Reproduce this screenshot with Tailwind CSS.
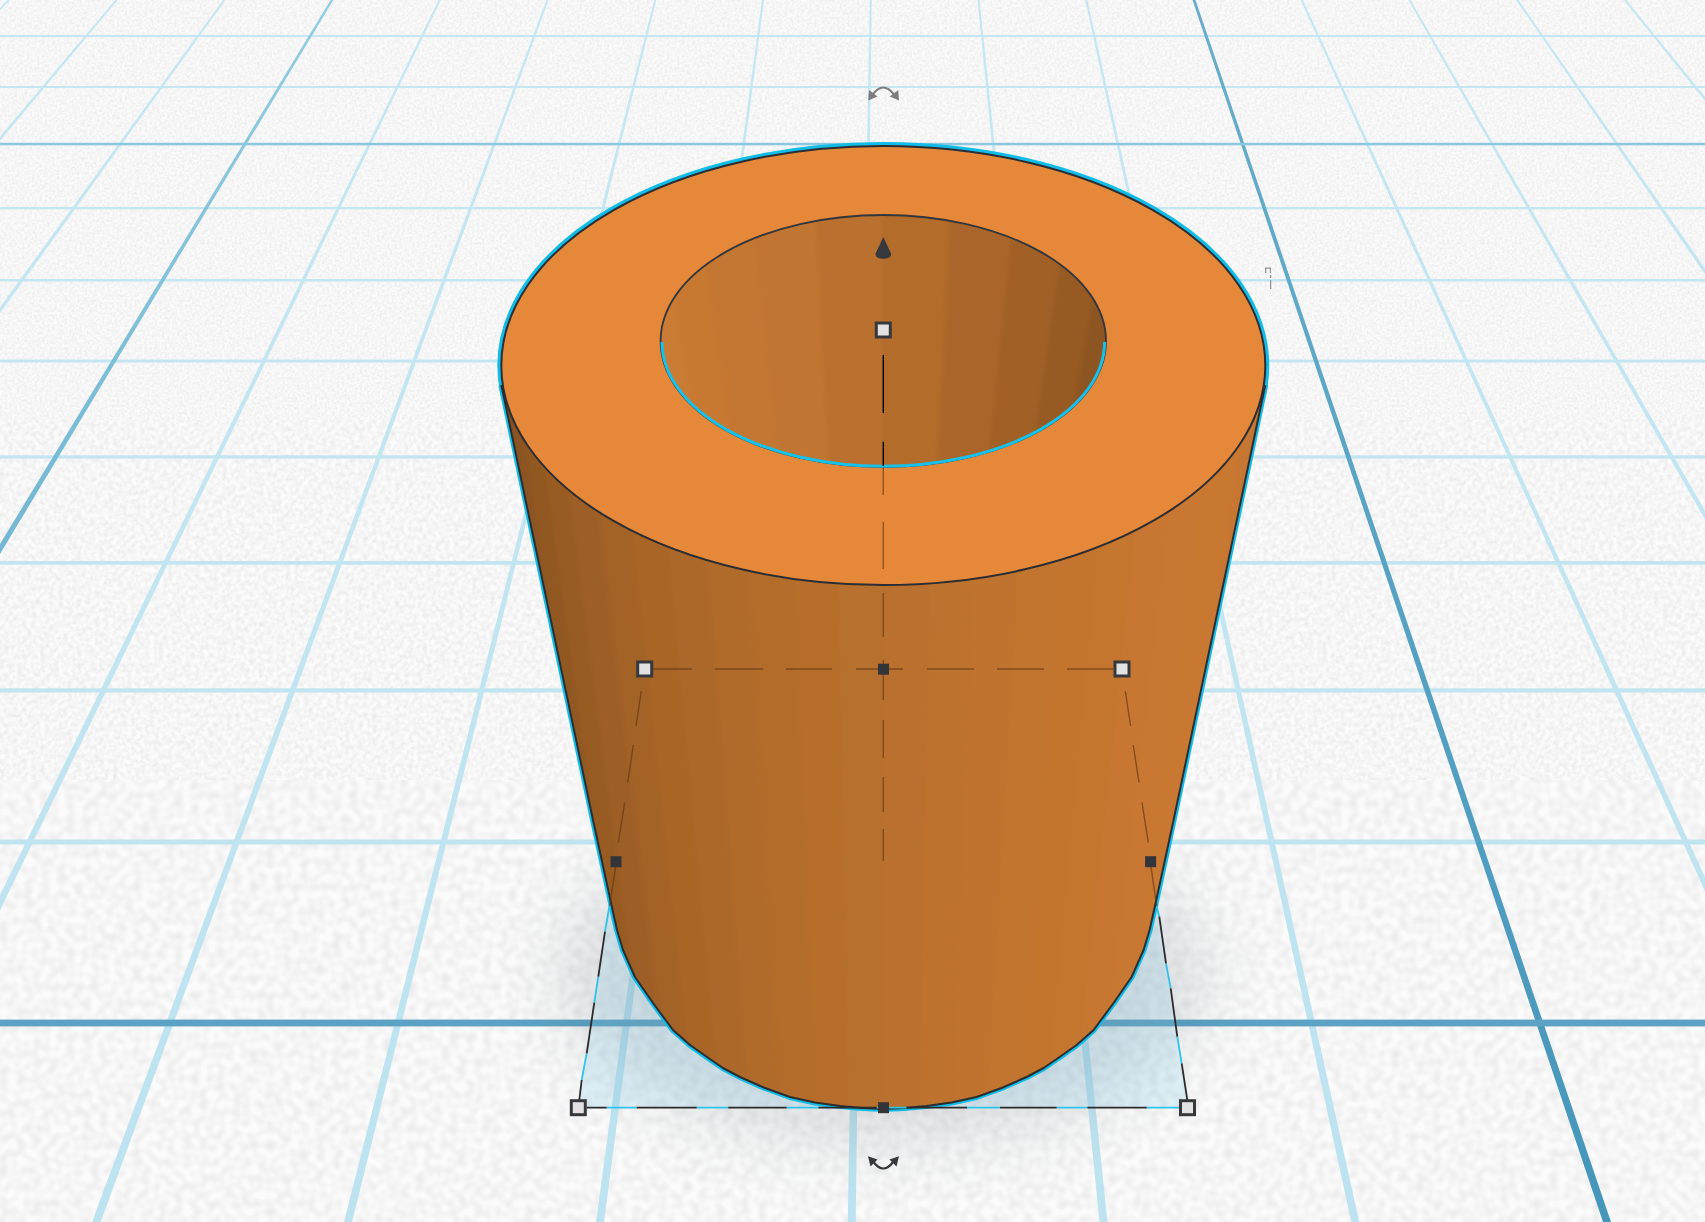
<!doctype html>
<html lang="en">
<head>
<meta charset="utf-8">
<title>Cylinder</title>
<script src="https://cdn.jsdelivr.net/npm/@tailwindcss/browser@4"></script>
</head>
<body class="m-0 bg-[#f8f8f8]">
<div class="relative w-[1705px] h-[1222px] overflow-hidden bg-[#fbfbfb]">
<svg class="block w-[1705px] h-[1222px]" viewBox="0 0 1705 1222" xmlns="http://www.w3.org/2000/svg">
  <defs>
    <filter id="n1" x="0" y="0" width="100%" height="100%" color-interpolation-filters="sRGB"><feTurbulence type="fractalNoise" baseFrequency="0.4" numOctaves="2" seed="4"/><feColorMatrix values="0 0 0 0 .45 0 0 0 0 .45 0 0 0 0 .47 .2 0 0 0 -.06"/></filter>
    <filter id="n2" x="0" y="0" width="100%" height="100%" color-interpolation-filters="sRGB"><feTurbulence type="fractalNoise" baseFrequency="0.22" numOctaves="2" seed="9"/><feColorMatrix values="0 0 0 0 .45 0 0 0 0 .45 0 0 0 0 .47 .22 0 0 0 -.07"/></filter>
    <filter id="n3" x="0" y="0" width="100%" height="100%" color-interpolation-filters="sRGB"><feTurbulence type="fractalNoise" baseFrequency="0.12" numOctaves="1" seed="12"/><feColorMatrix values="0 0 0 0 .45 0 0 0 0 .45 0 0 0 0 .47 .24 0 0 0 -.08"/></filter>
    <filter id="sh" x="-30%" y="-40%" width="160%" height="180%"><feGaussianBlur stdDeviation="34"/></filter>
    <filter id="soft" x="-5%" y="-5%" width="110%" height="110%"><feGaussianBlur stdDeviation="2.2"/></filter>
    <linearGradient id="tk0" gradientUnits="userSpaceOnUse" x1="0" y1="0" x2="0" y2="600"><stop offset="0" stop-color="#93cde1"/><stop offset="1" stop-color="#6fb5d2"/></linearGradient>
    <linearGradient id="tk8" gradientUnits="userSpaceOnUse" x1="0" y1="0" x2="0" y2="1222"><stop offset="0" stop-color="#68aecb"/><stop offset="1" stop-color="#4596bb"/></linearGradient>
    <linearGradient id="thin" gradientUnits="userSpaceOnUse" x1="0" y1="0" x2="0" y2="1222"><stop offset="0" stop-color="#c5e7f2"/><stop offset="1" stop-color="#bde3f0"/></linearGradient>
    <clipPath id="bodyClip"><path d="M501.3,385 L593,820 L611.7,906 L617,930 L623,950 L635,977 L653,1003 L673,1030 L690,1045 L707,1057 L723,1068 L740,1077 L765,1088 L790,1097 L815,1102.5 L840,1106 L862,1108 L883.3,1109 L904.6,1108 L926.6,1106 L951.6,1102.5 L976.6,1097 L1001.6,1088 L1026.6,1077 L1043.6,1068 L1059.6,1057 L1076.6,1045 L1093.6,1030 L1113.6,1003 L1131.6,977 L1143.6,950 L1149.6,930 L1155,906 L1173.6,820 L1265.3,385 Z"/></clipPath>
    <clipPath id="holeClip"><ellipse cx="883.3" cy="341" rx="222.7" ry="126"/></clipPath>
    <g id="wall">
      <polygon fill="#875120" points="480,365 505,365 617,1112 590,1112"/>
      <polygon fill="#8d5521" points="504.6,365 514.8,365 624,1112 616.6,1112"/>
      <polygon fill="#925822" points="514.3,365 530.9,365 635.3,1112 623.5,1112"/>
      <polygon fill="#985c24" points="530.4,365 553,365 650.8,1112 634.8,1112"/>
      <polygon fill="#9e5f25" points="552.5,365 580.7,365 670.4,1112 650.3,1112"/>
      <polygon fill="#a36226" points="580.2,365 613.7,365 693.6,1112 669.9,1112"/>
      <polygon fill="#a86528" points="613.2,365 651.2,365 720,1112 693.1,1112"/>
      <polygon fill="#ac6829" points="650.7,365 692.8,365 749.3,1112 719.5,1112"/>
      <polygon fill="#b06a2a" points="692.3,365 737.6,365 780.9,1112 748.8,1112"/>
      <polygon fill="#b36c2b" points="737.1,365 784.9,365 814.2,1112 780.4,1112"/>
      <polygon fill="#b66e2c" points="784.4,365 833.9,365 848.7,1112 813.7,1112"/>
      <polygon fill="#b86f2d" points="833.4,365 883.8,365 883.8,1112 848.2,1112"/>
      <polygon fill="#ba702d" points="883.3,365 933.7,365 918.9,1112 883.3,1112"/>
      <polygon fill="#bd722e" points="933.2,365 982.7,365 953.4,1112 918.4,1112"/>
      <polygon fill="#bf732e" points="982.2,365 1030,365 986.7,1112 952.9,1112"/>
      <polygon fill="#c1742f" points="1029.5,365 1074.8,365 1018.3,1112 986.2,1112"/>
      <polygon fill="#c3752f" points="1074.3,365 1116.4,365 1047.6,1112 1017.8,1112"/>
      <polygon fill="#c5762f" points="1115.9,365 1153.9,365 1074,1112 1047.1,1112"/>
      <polygon fill="#c77730" points="1153.4,365 1186.9,365 1097.2,1112 1073.5,1112"/>
      <polygon fill="#c87830" points="1186.4,365 1214.6,365 1116.8,1112 1096.7,1112"/>
      <polygon fill="#c97831" points="1214.1,365 1236.7,365 1132.3,1112 1116.3,1112"/>
      <polygon fill="#c97831" points="1236.2,365 1252.8,365 1143.6,1112 1131.8,1112"/>
      <polygon fill="#c67730" points="1252.3,365 1262.5,365 1150.5,1112 1143.1,1112"/>
      <polygon fill="#c27530" points="1262,365 1290,365 1180,1112 1150,1112"/>
    </g>
    <g id="well">
      <polygon fill="#cb7c35" points="600,215 632.7,215 682.9,467 650,467"/>
      <polygon fill="#ca7b35" points="632.2,215 658.6,215 703.6,467 682.4,467"/>
      <polygon fill="#c77933" points="658.1,215 700,215 736.8,467 703.1,467"/>
      <polygon fill="#c47732" points="699.5,215 753.8,215 779.8,467 736.3,467"/>
      <polygon fill="#c07431" points="753.3,215 816.5,215 830,467 779.3,467"/>
      <polygon fill="#ba702e" points="816,215 883.8,215 883.8,467 829.5,467"/>
      <polygon fill="#b36c2b" points="883.3,215 951.1,215 937.6,467 883.3,467"/>
      <polygon fill="#aa6629" points="950.6,215 1013.8,215 987.8,467 937.1,467"/>
      <polygon fill="#a06026" points="1013.3,215 1067.6,215 1030.8,467 987.3,467"/>
      <polygon fill="#965a23" points="1067.1,215 1109,215 1064,467 1030.3,467"/>
      <polygon fill="#8d5521" points="1108.5,215 1134.9,215 1084.7,467 1063.5,467"/>
      <polygon fill="#865120" points="1134.4,215 1170,215 1120,467 1084.2,467"/>
    </g>
  </defs>

  <!-- floor noise -->
  <rect x="0" y="0" width="1705" height="420" filter="url(#n1)"/>
  <rect x="0" y="420" width="1705" height="360" filter="url(#n2)"/>
  <rect x="0" y="780" width="1705" height="442" filter="url(#n3)"/>

  <!-- floor grid: converging lines -->
  <g fill="url(#thin)">
    <polygon points="7.4,0 10.1,0 -1157,1222 -1169,1222"/>
    <polygon points="115.2,0 117.8,0 -905,1222 -917,1222"/>
    <polygon points="223,0 225.5,0 -654,1222 -664,1222"/>
    <polygon points="438.6,0 440.9,0 -151,1222 -160,1222"/>
    <polygon points="546.4,0 548.6,0 100.6,1222 92,1222"/>
    <polygon points="654.2,0 656.3,0 352,1222 344,1222"/>
    <polygon points="762,0 764,0 604,1222 596,1222"/>
    <polygon points="869.7,0 871.8,0 855.7,1222 847.7,1222"/>
    <polygon points="977.5,0 979.5,0 1107.5,1222 1099.5,1222"/>
    <polygon points="1085.2,0 1087.3,0 1359.3,1222 1351.3,1222"/>
    <polygon points="1300.6,0 1302.9,0 1863,1222 1855,1222"/>
    <polygon points="1408.4,0 1410.6,0 2115,1222 2106,1222"/>
    <polygon points="1516,0 1518.5,0 2368,1222 2358,1222"/>
    <polygon points="1623.7,0 1626.3,0 2620,1222 2609,1222"/>
    <rect x="0" y="35" width="1705" height="2"/>
    <rect x="0" y="86" width="1705" height="2"/>
    <rect x="0" y="207" width="1705" height="2.3"/>
    <rect x="0" y="279" width="1705" height="2.5"/>
    <rect x="0" y="359.6" width="1705" height="2.9"/>
    <rect x="0" y="455.3" width="1705" height="3.3"/>
    <rect x="0" y="561" width="1705" height="3.7"/>
    <rect x="0" y="688.3" width="1705" height="4.2"/>
    <rect x="0" y="839.5" width="1705" height="5"/>
  </g>
  <polygon points="330.6,0 333.4,0 -402,1222 -412,1222" fill="url(#tk0)"/>
  <polygon points="1192.5,0 1195.5,0 1611,1222 1603,1222" fill="url(#tk8)"/>
  <rect x="0" y="142.8" width="1705" height="2.5" fill="#8ac8df"/>
  <rect x="0" y="1019.6" width="1705" height="6.8" fill="#5ba2c4"/>

  <!-- soft shadow and selection plane -->
  <ellipse cx="883" cy="975" rx="320" ry="165" fill="#46525e" opacity="0.17" filter="url(#sh)"/>
  <polygon points="578.3,1107.7 1187.7,1107.7 1157,905 609.5,905" fill="#86cdee" opacity="0.22"/>

  <!-- cyan selection outline -->
  <g fill="none" stroke="#12bce6" stroke-linejoin="round">
    <ellipse cx="883.3" cy="365.5" rx="382" ry="219.5" stroke-width="8"/>
    <path stroke-width="6" d="M501.3,385 L593,820 L611.7,906 L617,930 L623,950 L635,977 L653,1003 L673,1030 L690,1045 L707,1057 L723,1068 L740,1077 L765,1088 L790,1097 L815,1102.5 L840,1106 L862,1108 L883.3,1109 L904.6,1108 L926.6,1106 L951.6,1102.5 L976.6,1097 L1001.6,1088 L1026.6,1077 L1043.6,1068 L1059.6,1057 L1076.6,1045 L1093.6,1030 L1113.6,1003 L1131.6,977 L1143.6,950 L1149.6,930 L1155,906 L1173.6,820 L1265.3,385"/>
  </g>

  <!-- cylinder wall facets -->
  <g clip-path="url(#bodyClip)">
    <use href="#wall"/>
    <use href="#wall" filter="url(#soft)"/>
  </g>
  <path fill="none" stroke="#2b2d31" stroke-width="2" stroke-linejoin="round" d="M501.3,385 L593,820 L611.7,906 L617,930 L623,950 L635,977 L653,1003 L673,1030 L690,1045 L707,1057 L723,1068 L740,1077 L765,1088 L790,1097 L815,1102.5 L840,1106 L862,1108 L883.3,1109 L904.6,1108 L926.6,1106 L951.6,1102.5 L976.6,1097 L1001.6,1088 L1026.6,1077 L1043.6,1068 L1059.6,1057 L1076.6,1045 L1093.6,1030 L1113.6,1003 L1131.6,977 L1143.6,950 L1149.6,930 L1155,906 L1173.6,820 L1265.3,385"/>

  <!-- rim -->
  <ellipse cx="883.3" cy="365.5" rx="382" ry="219.5" fill="#e5883a" stroke="#2b2d33" stroke-width="2"/>

  <!-- hole facets -->
  <g clip-path="url(#holeClip)">
    <use href="#well"/>
    <use href="#well" filter="url(#soft)"/>
  </g>
  <ellipse cx="883.3" cy="341" rx="222.7" ry="126" fill="none" stroke="#33363c" stroke-width="1.8"/>
  <path fill="none" stroke="#16c2ec" stroke-width="3" d="M662,342 A221.3,124.2 0 0 0 1104.6,342"/>

  <!-- handle guides -->
  <g stroke="#000" stroke-width="1.4" fill="none">
    <path d="M883.3,355 V413 M883.3,441.7 V466"/>
  </g>
  <g stroke="#5c3413" stroke-opacity="0.62" stroke-width="1.4" fill="none">
    <path d="M883.3,467 V495 M883.3,521.7 V569 M883.3,593 V637 M883.3,660 V700 M883.3,720 V758 M883.3,777 V812 M883.3,829 V861"/>
    <path stroke-width="1.6" d="M653,669 H692 M715,669 H763 M786,669 H832 M856,669 H903 M927,669 H974 M997,669 H1044 M1067,669 H1113"/>
    <path d="M641.3,691 L636,726 M633.3,745 L627.7,782.7 M624.7,802.3 L618.3,842.7 M615.7,866.7 L609.5,906"/>
    <path d="M1125.3,691 L1130.6,726 M1133.3,745 L1139,782.7 M1142,802.3 L1148.3,842.7 M1151,866.7 L1156.7,906"/>
  </g>

  <!-- base selection lines: cyan and dark alternate -->
  <g stroke="#2ec3ea" stroke-width="1.8" fill="none">
    <path d="M609.3,906.7 L605,931.7 M598.3,976.7 L594.3,1002.7 M586.7,1053.3 L581.7,1080"/>
    <path d="M1156.7,906.7 L1159.3,916.7 M1166,963.3 L1170.7,988.3 M1177.3,1036.7 L1181.7,1063.3"/>
    <path d="M606.7,1107.7 H636.7 M696.7,1107.7 H728.3 M786.7,1107.7 H818.3 M876.7,1107.7 H906.7 M967,1107.7 H1000 M1056.7,1107.7 H1087.3 M1146.7,1107.7 H1180"/>
  </g>
  <g stroke="#2b2b2b" stroke-width="1.8" fill="none">
    <path d="M605,931.7 L598.3,976.7 M594.3,1002.7 L586.7,1053.3 M581.7,1080 L579.3,1100"/>
    <path d="M1159.3,916.7 L1166,963.3 M1170.7,988.3 L1177.3,1036.7 M1181.7,1063.3 L1187.3,1100"/>
    <path d="M586.7,1107.7 H606.7 M636.7,1107.7 H696.7 M728.3,1107.7 H786.7 M818.3,1107.7 H876.7 M906.7,1107.7 H967 M1000,1107.7 H1056.7 M1087.3,1107.7 H1146.7"/>
  </g>

  <!-- handles: large -->
  <g fill="#e2e2e2" stroke="#36383c" stroke-width="3">
    <rect x="876.3" y="323" width="14" height="14"/>
    <rect x="637.7" y="662" width="14" height="14"/>
    <rect x="1115" y="662" width="14" height="14"/>
    <rect x="571.3" y="1100.7" width="14" height="14"/>
    <rect x="1180.5" y="1100.7" width="14" height="14"/>
  </g>
  <!-- handles: small -->
  <g fill="#33353a">
    <rect x="878" y="663.7" width="11" height="11"/>
    <rect x="610.5" y="856.2" width="11" height="11"/>
    <rect x="1145.1" y="856.2" width="11" height="11"/>
    <rect x="878" y="1102.2" width="11" height="11"/>
  </g>

  <!-- height cone -->
  <path fill="#36383c" d="M883.3,237 L875.6,253.5 Q874.6,258.5 883.3,258.8 Q892,258.5 891,253.5 Z"/>

  <!-- rotate arrows -->
  <path fill="none" stroke="#7d7d7d" stroke-width="2.2" d="M873,94 Q883.3,81 893.6,94"/>
  <g fill="#7d7d7d">
    <polygon points="868.3,100.5 869,90 877.5,96.5"/>
    <polygon points="899,100.5 898.3,90 889.8,96.5"/>
  </g>
  <path fill="none" stroke="#36383c" stroke-width="2.2" d="M873.5,1162 Q883.3,1175 893.1,1162"/>
  <g fill="#36383c">
    <polygon points="868,1156.3 870.5,1166.5 877.5,1159.5"/>
    <polygon points="899,1156.3 896.5,1166.5 889.5,1159.5"/>
  </g>
  <!-- side ruler tick -->
  <g fill="none" stroke="#8f8f8f" stroke-width="1.2">
    <path d="M1265.6,273 V268.2 H1270.4 V273"/>
    <path d="M1270.6,275 V278 M1270.6,280 V289"/>
  </g>
</svg>
</div>
</body>
</html>
